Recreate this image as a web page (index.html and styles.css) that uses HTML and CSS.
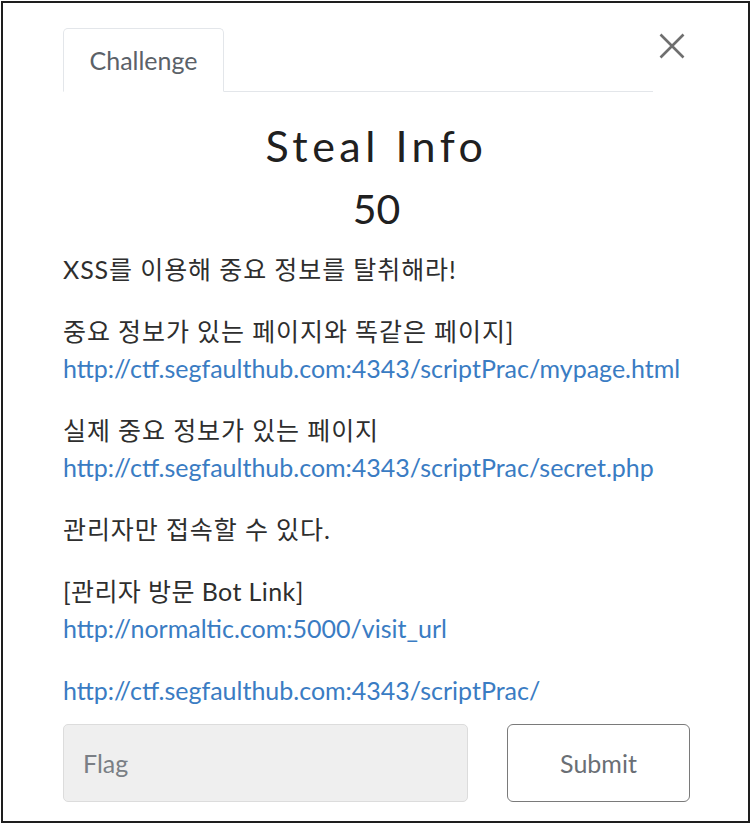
FILE: index.html
```html
<!DOCTYPE html>
<html lang="ko">
<head>
<meta charset="utf-8">
<title>Steal Info</title>
<link rel="stylesheet" href="styles.css">
</head>
<body>
<div class="frame">
  <div class="modal">
    <div class="head">
      <ul class="tabs">
        <li class="tab">Challenge</li>
      </ul>
      <button class="close" type="button" aria-label="Close">
        <svg width="26" height="26" viewBox="0 0 26 26"><path d="M1.5 1.5 L24.5 24.5 M24.5 1.5 L1.5 24.5" stroke="#6f6f6f" stroke-width="2.6" fill="none"/></svg>
      </button>
    </div>
    <h2 class="title">Steal Info</h2>
    <h3 class="value">50</h3>
    <div class="desc">
      <p><span class="ko">XSS를 이용해 중요 정보를 탈취해라!</span></p>
      <p><span class="ko">중요 정보가 있는 페이지와 똑같은 페이지]</span><br><a href="#">http://ctf.segfaulthub.com:4343/scriptPrac/mypage.html</a></p>
      <p><span class="ko">실제 중요 정보가 있는 페이지</span><br><a href="#">http://ctf.segfaulthub.com:4343/scriptPrac/secret.php</a></p>
      <p><span class="ko">관리자만 접속할 수 있다.</span></p>
      <p><span class="ko ko-mixed">[관리자 방문 Bot Link]</span><br><a href="#">http://normaltic.com:5000/visit_url</a></p>
      <p><a href="#">http://ctf.segfaulthub.com:4343/scriptPrac/</a></p>
    </div>
    <form class="flag-row">
      <input class="flag-input" type="text" placeholder="Flag">
      <button class="submit" type="button">Submit</button>
    </form>
  </div>
</div>
</body>
</html>
```
FILE: styles.css
```css
* { box-sizing: border-box; }
html, body { margin: 0; padding: 0; background: #fff; }
body {
  font-family: Lato, "Noto Sans CJK KR", sans-serif;
  color: #2a2a2a;
}
.frame {
  margin: 1px 0 0 1px;
  width: 749px;
  height: 822px;
  border: 2px solid #1e1e1e;
  background: #fff;
}
.modal {
  padding: 25px 58px 0 60px;
}
.head {
  display: flex;
  align-items: flex-start;
}
.tabs {
  flex: 1;
  list-style: none;
  margin: 0;
  padding: 0;
  display: flex;
  border-bottom: 1px solid #e3e6ea;
  height: 64px;
}
.tab {
  width: 161px;
  height: 64px;
  border: 1px solid #e3e6ea;
  border-bottom-color: #fff;
  border-radius: 5px 5px 0 0;
  background: #fff;
  color: #5b6168;
  font-size: 25px;
  line-height: 62px;
  text-align: center;
}
.close {
  width: 37px;
  height: 36px;
  margin-top: 0;
  padding: 0;
  border: 0;
  background: none;
  display: flex;
  align-items: center;
  justify-content: center;
}
.title {
  margin: 28px 0 0;
  font-size: 43px;
  font-weight: 400;
  line-height: 52px;
  letter-spacing: 4.5px;
  text-align: center;
  color: #202020;
}
.value {
  margin: 12px 0 0;
  font-size: 41px;
  font-weight: 400;
  line-height: 49px;
  text-align: center;
  color: #202020;
}
.desc {
  margin-top: 18px;
  font-size: 25px;
  line-height: 37px;
  color: #2e2e2e;
}
.desc p { margin: 0 0 25px; }
.desc p:last-child { margin-bottom: 0; }
.desc .ko { letter-spacing: 0.9px; }
.desc .ko-mixed { letter-spacing: 0.4px; }
.desc a { color: #3a7cc3; text-decoration: none; }
.flag-row {
  margin-top: 15px;
  display: flex;
  gap: 39px;
}
.flag-input {
  width: 405px;
  height: 78px;
  border: 1px solid #dcdcdc;
  border-radius: 5px;
  background: #efefef;
  padding: 0 19px;
  font-family: Lato, sans-serif;
  font-size: 25px;
  color: #333;
}
.flag-input::placeholder { color: #7a7f85; }
.submit {
  width: 183px;
  height: 78px;
  border: 1.5px solid #7a7a7a;
  border-radius: 6px;
  background: #fff;
  font-family: Lato, sans-serif;
  font-size: 25px;
  color: #6a6f75;
}
```
